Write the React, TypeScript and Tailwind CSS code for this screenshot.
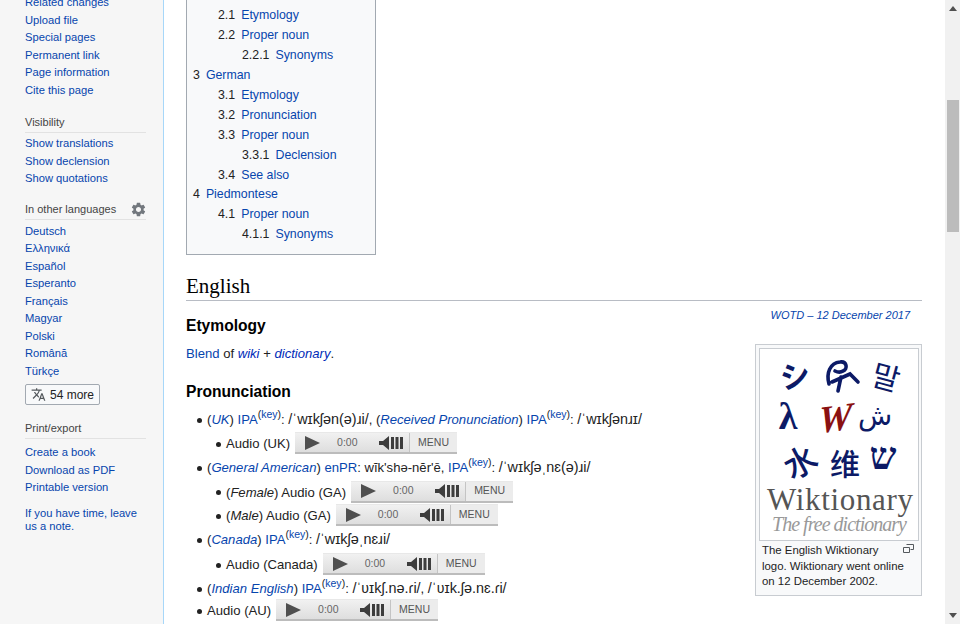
import React from 'react';
import { MdSettings, MdTranslate } from 'react-icons/md';

const navLink = 'block h-[17.5px] leading-[17.5px] text-[11.2px] text-[#0645ad]';
const portalHead = 'h-[20px] text-[11px] leading-[18px] text-[#444] border-b border-[#e2e2e2]';

const NavGroup = ({ items }: { items: string[] }) => (
  <div>
    {items.map((item) => (
      <a key={item} className={navLink}>
        {item}
      </a>
    ))}
  </div>
);

const TocRow = ({ num, label, level }: { num: string; label: string; level: number }) => {
  const indent = level === 0 ? 'pl-0' : level === 1 ? 'pl-[25px]' : 'pl-[49px]';
  return (
    <div className={`${indent} h-[19.95px] leading-[19.95px] whitespace-nowrap`}>
      <span className="text-[#222] mr-[6px]">{num}</span>
      <a className="text-[#0645ad]">{label}</a>
    </div>
  );
};

const AudioPlayer = () => (
  <div className="flex items-stretch w-[162px] h-[22px] ml-[5px] -mt-[2px] shrink-0 bg-gradient-to-b from-[#f1f1f1] to-[#dedede] border-b-2 border-[#bcbcbc] border-t border-t-[#e8e8e8]">
    <svg width="16" height="14" viewBox="0 0 16 14" className="ml-[10px] self-center">
      <path d="M0 0 L15 7 L0 14 Z" fill="#4f4f4f" />
    </svg>
    <span className="ml-[16px] w-[24px] self-center text-[10.5px] text-[#666]">0:00</span>
    <svg width="26" height="14" viewBox="0 0 26 14" className="ml-[18px] self-center">
      <path d="M0 5 H4 L10 0 V14 L4 9 H0 Z" fill="#3d3d3d" />
      <rect x="12" y="1" width="3" height="12" fill="#3d3d3d" />
      <rect x="16.5" y="1" width="3" height="12" fill="#3d3d3d" />
      <rect x="21" y="1" width="3" height="12" fill="#3d3d3d" />
    </svg>
    <div className="ml-[4px] flex-1 flex items-center justify-center bg-[#ececec] border-l border-[#c4c4c4] text-[10.5px] text-[#555]">
      MENU
    </div>
  </div>
);

const Key = () => (
  <sup className="text-[10.5px] leading-none align-baseline relative -top-[6px]">
    (<a className="text-[#0645ad]">key</a>)
  </sup>
);

const Ipa = ({ children }: { children: string }) => <span className="text-[14.4px]">{children}</span>;

const Bullet = () => <span className="w-[5px] h-[5px] rounded-full bg-[#222] shrink-0 mr-[5px]" />;

const Logo = () => (
  <svg width="158" height="191" viewBox="0 0 158 191" className="block">
    <g fill="#0c1a66" fontFamily="'Noto Sans CJK JP', 'DejaVu Sans', sans-serif" textAnchor="middle">
      <text x="0" y="0" fontSize="30" fontWeight="700" transform="translate(37 38) rotate(-10)">シ</text>
      <text x="0" y="0" fontSize="30" fontWeight="400" fontFamily="'Noto Sans CJK KR', sans-serif" transform="translate(123 39) rotate(15)">말</text>
      <text x="0" y="0" fontSize="38" fontFamily="'Liberation Serif', serif" fontWeight="700" transform="translate(28 80)">λ</text>
      <text x="0" y="0" fontSize="28" fontFamily="'DejaVu Sans', sans-serif" transform="translate(115 76)">ش</text>
      <text x="0" y="0" fontSize="33" fontWeight="500" fontFamily="'Noto Sans CJK SC', sans-serif" transform="translate(46 124) rotate(-28)">水</text>
      <text x="0" y="0" fontSize="30" fontWeight="500" fontFamily="'Noto Sans CJK SC', sans-serif" transform="translate(85 126)">维</text>
      <text x="0" y="0" fontSize="38" fontWeight="700" fontFamily="'Liberation Serif', serif" transform="translate(123 120)">ש</text>
    </g>
    <path d="M69 35 C66 24 70 14 80 13 C87 12 88 20 83 22 C80 24 77 23 75 22 M72 33 L90 25 L98 33 M81 28 L78 42" fill="none" stroke="#0c1a66" strokeWidth="3.6" strokeLinecap="round" />
    <text x="0" y="0" fontSize="38" fontWeight="700" fontStyle="italic" fontFamily="'Liberation Serif', serif" fill="#8a1111" textAnchor="middle" transform="translate(75 82) rotate(-8) skewX(-10)">W</text>
    <text x="7" y="161" fontSize="31" fontFamily="'Liberation Serif', serif" fill="#555" textLength="146">Wiktionary</text>
    <text x="12" y="182" fontSize="20" fontStyle="italic" fontFamily="'Liberation Serif', serif" fill="#999" textLength="135">The free dictionary</text>
  </svg>
);

const App = () => {
  return (
    <div className="flex w-[960px] h-[624px] overflow-hidden bg-white font-['Liberation_Sans','DejaVu_Sans',sans-serif] text-[13.1px] text-[#222]">
      {/* Sidebar */}
      <aside className="w-[164px] shrink-0 h-full bg-[#f6f6f6] border-r border-[#a7d7f9] pl-[25px] pr-[17px]">
        <div className="-mt-[6px]">
          <NavGroup items={['Related changes', 'Upload file', 'Special pages', 'Permanent link', 'Page information', 'Cite this page']} />
        </div>
        <div className="mt-[14px] mb-[2px]">
          <div className={portalHead}>Visibility</div>
        </div>
        <NavGroup items={['Show translations', 'Show declension', 'Show quotations']} />
        <div className="mt-[12px] mb-[3px]">
          <div className={`${portalHead} flex items-center justify-between`}>
            <span>In other languages</span>
            <MdSettings className="text-[#72777d] mr-[-1px]" size={17} />
          </div>
        </div>
        <NavGroup items={['Deutsch', 'Ελληνικά', 'Español', 'Esperanto', 'Français', 'Magyar', 'Polski', 'Română', 'Türkçe']} />
        <button className="mt-[4px] w-[75px] h-[21px] flex items-center justify-center gap-[4px] bg-[#f8f9fa] border border-[#a2a9b1] rounded-[2px] text-[12px] text-[#222]">
          <MdTranslate size={15} className="text-[#54595d]" />
          54 more
        </button>
        <div className="mt-[14px] mb-[5px]">
          <div className={portalHead}>Print/export</div>
        </div>
        <NavGroup items={['Create a book', 'Download as PDF', 'Printable version']} />
        <p className="mt-[10px] text-[11.2px] leading-[13px] text-[#0645ad]">If you have time, leave us a note.</p>
      </aside>

      {/* Content */}
      <main className="flex-1 min-w-0 h-full pl-[22px] pr-[23px]">
        <div className="-mt-[5px] pt-[11px] w-[190px] h-[260px] bg-[#f8f9fa] border border-[#a2a9b1] border-t-0 px-[6px] text-[12.35px]">
          <TocRow num="2.1" label="Etymology" level={1} />
          <TocRow num="2.2" label="Proper noun" level={1} />
          <TocRow num="2.2.1" label="Synonyms" level={2} />
          <TocRow num="3" label="German" level={0} />
          <TocRow num="3.1" label="Etymology" level={1} />
          <TocRow num="3.2" label="Pronunciation" level={1} />
          <TocRow num="3.3" label="Proper noun" level={1} />
          <TocRow num="3.3.1" label="Declension" level={2} />
          <TocRow num="3.4" label="See also" level={1} />
          <TocRow num="4" label="Piedmontese" level={0} />
          <TocRow num="4.1" label="Proper noun" level={1} />
          <TocRow num="4.1.1" label="Synonyms" level={2} />
        </div>

        <h2 className="mt-[17px] h-[29px] leading-[28px] font-['Liberation_Serif',serif] text-[21px] text-black border-b border-[#b8bcc4]">
          English
        </h2>

        <div className="flex">
          <div className="flex-1 min-w-0">
            <h3 className="mt-[15px] font-bold text-[15.6px] leading-[20px] text-black">Etymology</h3>
            <p className="mt-[8px] leading-[20px]">
              <a className="text-[#0645ad]">Blend</a> of <a className="italic text-[#002bb8]">wiki</a> +{' '}
              <a className="italic text-[#002bb8]">dictionary</a>.
            </p>
            <h3 className="mt-[18px] font-bold text-[15.6px] leading-[20px] text-black">Pronunciation</h3>

            <div className="mt-[8px] pl-[11px] whitespace-nowrap">
              <div className="flex items-center h-[20px]">
                <Bullet />
                <span>
                  (<a className="italic text-[#0645ad]">UK</a>) <a className="text-[#0645ad]">IPA</a>
                  <Key />: <Ipa>/ˈwɪkʃən(ə)ɹi/</Ipa>, (<a className="italic text-[#0645ad]">Received Pronunciation</a>){' '}
                  <a className="text-[#0645ad]">IPA</a>
                  <Key />: <Ipa>/ˈwɪkʃənɹɪ/</Ipa>
                </span>
              </div>
              <div className="flex items-center h-[24px] mt-[2px] pl-[19px]">
                <Bullet />
                <span>Audio (UK)</span>
                <AudioPlayer />
              </div>
              <div className="flex items-center h-[20px] mt-[2px]">
                <Bullet />
                <span>
                  (<a className="italic text-[#0645ad]">General American</a>) <a className="text-[#0645ad]">enPR</a>: wĭk'shə-nĕr'ē,{' '}
                  <a className="text-[#0645ad]">IPA</a>
                  <Key />: <Ipa>/ˈwɪkʃəˌnɛ(ə)ɹi/</Ipa>
                </span>
              </div>
              <div className="flex items-center h-[23px] mt-[3px] pl-[19px]">
                <Bullet />
                <span>
                  (<i>Female</i>) Audio (GA)
                </span>
                <AudioPlayer />
              </div>
              <div className="flex items-center h-[24px] pl-[19px]">
                <Bullet />
                <span>
                  (<i>Male</i>) Audio (GA)
                </span>
                <AudioPlayer />
              </div>
              <div className="flex items-center h-[20px] mt-[2px]">
                <Bullet />
                <span>
                  (<a className="italic text-[#0645ad]">Canada</a>) <a className="text-[#0645ad]">IPA</a>
                  <Key />: <Ipa>/ˈwɪkʃəˌnɛɹi/</Ipa>
                </span>
              </div>
              <div className="flex items-center h-[24px] mt-[3px] pl-[19px]">
                <Bullet />
                <span>Audio (Canada)</span>
                <AudioPlayer />
              </div>
              <div className="flex items-center h-[20px] mt-[2px]">
                <Bullet />
                <span>
                  (<a className="italic text-[#0645ad]">Indian English</a>) <a className="text-[#0645ad]">IPA</a>
                  <Key />: <Ipa>/ˈʋɪkʃ.nə.ɾi/</Ipa>, <Ipa>/ˈʋɪk.ʃə.nɛ.ɾi/</Ipa>
                </span>
              </div>
              <div className="flex items-center h-[24px]">
                <Bullet />
                <span>Audio (AU)</span>
                <AudioPlayer />
              </div>
            </div>
          </div>

          <div className="w-[167px] shrink-0">
            <p className="mt-[7px] pr-[12px] text-right italic text-[11px] leading-[14px] text-[#0645ad]">WOTD – 12 December 2017</p>
            <div className="mt-[22px] p-[3px] pb-[5px] bg-[#f8f9fa] border border-[#c8ccd1]">
              <div className="bg-white border border-[#c8ccd1] w-[160px]">
                <Logo />
              </div>
              <div className="mt-[2px] pl-[3px] text-[11.4px] leading-[15.5px] text-[#222]">
                <svg width="11" height="9" viewBox="0 0 11 9" className="float-right mr-[4px] mt-[1px]">
                  <path d="M3.5 .5 H10.5 V5.5 H7.5 M.5 3.5 H6.5 V8.5 H.5 Z" fill="none" stroke="#54595d" strokeWidth="1" />
                </svg>
                The English Wiktionary logo. Wiktionary went online on 12 December 2002.
              </div>
            </div>
          </div>
        </div>
      </main>

      {/* Scrollbar */}
      <div className="w-[15px] shrink-0 h-full bg-[#f1f1f1] flex flex-col items-center">
        <svg width="8" height="5" viewBox="0 0 8 5" className="mt-[6px]">
          <path d="M4 0 L8 5 H0 Z" fill="#505050" />
        </svg>
        <div className="mt-[89px] w-[12px] h-[132px] bg-[#bcbcbc]" />
        <div className="flex-1" />
        <svg width="8" height="5" viewBox="0 0 8 5" className="mb-[6px]">
          <path d="M0 0 H8 L4 5 Z" fill="#505050" />
        </svg>
      </div>
    </div>
  );
};

export default App;
